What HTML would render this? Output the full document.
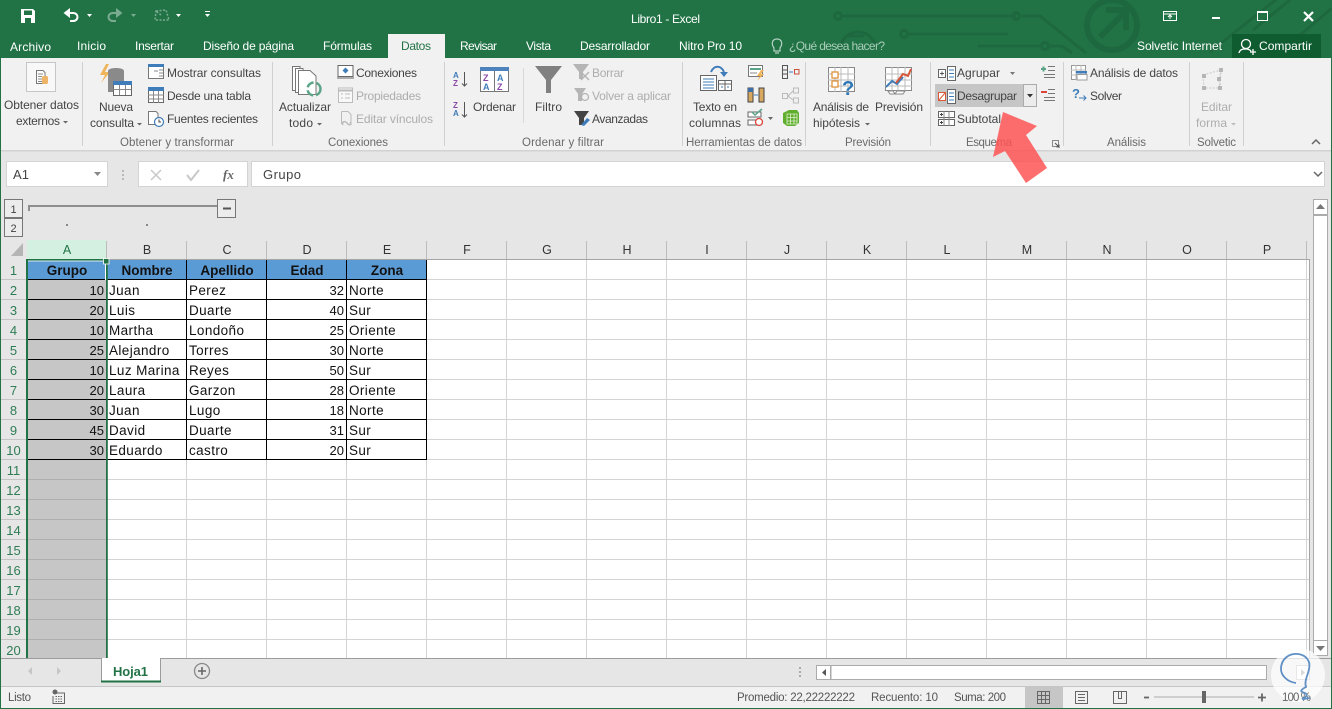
<!DOCTYPE html>
<html><head><meta charset="utf-8"><title>Libro1 - Excel</title>
<style>
html,body{margin:0;padding:0;background:#e6e6e6;overflow:hidden}
svg{display:block;font-family:"Liberation Sans",sans-serif}
.r{font-size:12px;fill:#444}
.g{font-size:12px;fill:#adadad}
.l{font-size:11.5px;fill:#6a6a6a}
.t{font-size:12px;fill:#fff}
.s{font-size:11.5px;fill:#555}
.c{font-size:13.5px;fill:#111;letter-spacing:.4px}
.n{font-size:13px;fill:#111;text-anchor:end}
.h{font-size:13.5px;font-weight:bold;fill:#111;text-anchor:middle}
.ch{font-size:12.5px;fill:#333;text-anchor:middle}
.rn{font-size:13px;fill:#2f7d55;text-anchor:middle}
</style></head><body>
<svg width="1332" height="709" viewBox="0 0 1332 709" xmlns="http://www.w3.org/2000/svg">
<defs>
<pattern id="grid" patternUnits="userSpaceOnUse" x="27" y="260" width="80" height="20"><rect width="80" height="20" fill="#fff"/><path d="M79.5 0V20M0 19.5H80" stroke="#d4d4d4" fill="none"/></pattern>
<pattern id="gsel" patternUnits="userSpaceOnUse" x="27" y="260" width="80" height="20"><rect width="80" height="20" fill="#c6c6c6"/><path d="M0 19.5H80" stroke="#aeaeae" fill="none"/></pattern>
</defs>
<!-- window -->
<rect width="1332" height="709" fill="#217346"/>
<!-- circuit decoration -->
<g fill="none" stroke="#1e6840" stroke-width="3">
<path d="M843 16H1016"/><path d="M1022 16H1040L1086 53"/><circle cx="838" cy="16" r="3.5"/><circle cx="1016" cy="16" r="3.5"/>
<path d="M909 34H1008"/><circle cx="904" cy="34" r="3.5"/><path d="M978 46H1040"/><circle cx="1045" cy="46" r="3.5"/><path d="M1050 46H1062L1072 53"/>
<path d="M840 50A18 18 0 0 1 876 50"/><path d="M848 36H864"/>
<circle cx="1112" cy="25" r="25" stroke-width="6"/><path d="M1100 37L1124 13M1106 10H1126V30" stroke-width="6"/>
<path d="M1210 52L1288 -10M1280 52L1332 8M1253 30L1290 0" />
</g>
<!-- QAT -->
<g fill="#fff"><path d="M21 9H33L35 11V23H21ZM24 10.5V15H32V10.5ZM25 18V23H31V18Z" fill-rule="evenodd"/></g>
<g fill="none" stroke="#fff" stroke-width="2"><path d="M66 13H73C79 13 79 21 73 21H70"/></g><path d="M70 8V18L63.500 13Z" fill="#fff"/>
<path d="M87 14H92L89.500 17ZM205 14H210L207.500 17ZM176 14H181L178.500 17Z" fill="#fff"/><path d="M205 11.500H210" stroke="#fff"/>
<g opacity=".4"><g fill="none" stroke="#fff" stroke-width="2"><path d="M120 13H113C107 13 107 21 113 21H116"/></g><path d="M116 8V18L122.500 13Z" fill="#fff"/><path d="M131 14H136L133.500 17Z" fill="#fff"/>
<path d="M156 11L166 10L169 20H155ZM161 15L156 11" fill="none" stroke="#fff" stroke-dasharray="2 1.500" stroke-width="1.500"/></g>
<text x="631" y="23" class="t" textLength="69">Libro1 - Excel</text>
<!-- window controls -->
<g fill="none" stroke="#fff"><path d="M1163.500 11.500H1176.500V20.500H1163.500ZM1163.500 14H1176.500"/><path d="M1170 19V15.500M1168 17L1170 15L1172 17"/>
<path d="M1212 18H1220" stroke-width="2"/><path d="M1257.500 12.500H1267.500V20.500H1257.500Z"/><path d="M1257 12H1268" stroke-width="2"/><path d="M1304 12L1313 21M1313 12L1304 21" stroke-width="2.200"/></g>
<!-- tabs -->
<rect x="1" y="58" width="1330" height="92" fill="#f1f1f1"/>
<rect x="388" y="34" width="57" height="24" fill="#f1f1f1"/>
<text x="10" y="51" class="t" textLength="41">Archivo</text>
<text x="77" y="50" class="t" textLength="29">Inicio</text>
<text x="135" y="50" class="t" textLength="39">Insertar</text>
<text x="203" y="50" class="t" textLength="91">Diseño de página</text>
<text x="323" y="50" class="t" textLength="49">Fórmulas</text>
<text x="401" y="50" class="t" style="fill:#217346" textLength="30">Datos</text>
<text x="460" y="50" class="t" textLength="37">Revisar</text>
<text x="526" y="50" class="t" textLength="25">Vista</text>
<text x="580" y="50" class="t" textLength="70">Desarrollador</text>
<text x="679" y="50" class="t" textLength="63">Nitro Pro 10</text>
<g fill="none" stroke="#b5d2c2" stroke-width="1.200"><path d="M774 48C771 44 772 39 777 39C782 39 783 44 780 48V51H774ZM775 53H779"/></g>
<text x="789" y="50" class="t" style="fill:#a9cdb8" textLength="96">¿Qué desea hacer?</text>
<text x="1137" y="50" class="t" textLength="85">Solvetic Internet</text>
<rect x="1232" y="34" width="89" height="24" fill="#0f5c31"/>
<g fill="none" stroke="#fff" stroke-width="1.300"><circle cx="1246" cy="44" r="4.500"/><path d="M1239 53C1240 49 1243 49 1246 49C1249 49 1250 50 1251 51M1250 52H1256M1253 49V55"/></g>
<text x="1259" y="50" class="t" textLength="53">Compartir</text>
<!-- ribbon line & lower -->
<rect x="1" y="150" width="1330" height="90" fill="#e6e6e6"/>
<rect x="1" y="150" width="1330" height="1.500" fill="#d2d2d2"/>
<!-- group seps -->
<path d="M82.500 62V146M272.500 62V146M444.500 62V146M682.500 62V146M805.500 62V146M930.500 62V146M1063.500 62V146M1189.500 62V146M1243.500 62V146" stroke="#d0d0d0"/>
<path d="M523.500 68V123" stroke="#d8d8d8"/>
<!-- Obtener datos -->
<rect x="26.500" y="62.500" width="29" height="29" fill="#f8f8f8" stroke="#c6c6c6"/>
<path d="M36.500 70.500H43L45 72.500V83.500H36.500Z" fill="#fff" stroke="#777"/><path d="M38 74H43M38 76.500H42M38 79H42M38 81.500H42" stroke="#888"/><rect x="42" y="76" width="6" height="8" rx="1.500" fill="#eeb566"/>
<text x="4" y="109" class="r" textLength="75">Obtener datos</text><text x="16" y="125" class="r" textLength="44">externos</text><path d="M63 121H68L65.500 123.500Z" fill="#666"/>
<!-- Nueva consulta -->
<path d="M106 64L100 75H105L101 83L110 72H105L109 64Z" fill="#f0b45a"/>
<path d="M108 71C108 67 124 67 124 71V92H108Z" fill="#8a8a8a"/>
<rect x="113.500" y="81.500" width="18" height="14" fill="#fff" stroke="#666"/><rect x="113" y="81" width="19" height="4" fill="#3f7cba"/><path d="M113 89.500H131M119.500 85V95M125.500 85V95" stroke="#888"/>
<text x="99" y="111" class="r" textLength="34">Nueva</text><text x="90" y="127" class="r" textLength="44">consulta</text><path d="M137 123H142L139.500 125.500Z" fill="#666"/>
<rect x="148.500" y="64.500" width="15" height="14" fill="#fff" stroke="#777"/><rect x="148" y="64" width="16" height="3" fill="#3f7cba"/><path d="M159 70H163M159 73H163M159 76H163M154 71H158" stroke="#888"/>
<text x="167" y="77" class="r" textLength="94">Mostrar consultas</text>
<rect x="148.500" y="87.500" width="15" height="15" fill="#fff" stroke="#666"/><rect x="148" y="87" width="16" height="4" fill="#3f7cba"/><path d="M148 95H164M148 99H164M153.500 91V103M158.500 91V103" stroke="#888"/>
<text x="167" y="100" class="r" textLength="84">Desde una tabla</text>
<path d="M148.500 111.500H156L158 113.500V124.500H148.500Z" fill="#fff" stroke="#777"/><circle cx="159" cy="122" r="4.500" fill="#fff" stroke="#3f7cba" stroke-width="1.200"/><path d="M159 119.500V122H161" stroke="#444" fill="none"/>
<text x="167" y="123" class="r" textLength="91">Fuentes recientes</text>
<text x="120" y="146" class="l" textLength="114">Obtener y transformar</text>
<!-- Actualizar -->
<g fill="#fff" stroke="#777"><path d="M292.500 66.500H300V90.500H292.500Z"/><path d="M295.500 68.500H303V92.500H295.500Z"/><path d="M298.500 70.500H310L316 76V94.500H298.500Z"/></g>
<circle cx="314" cy="89" r="6.500" fill="none" stroke="#5aa587" stroke-width="2.500" stroke-dasharray="8 3"/>
<text x="279" y="111" class="r" textLength="52">Actualizar</text><text x="289" y="127" class="r" textLength="24">todo</text><path d="M317 123H322L319.500 125.500Z" fill="#666"/>
<rect x="338" y="65.500" width="15" height="11" fill="#fff" stroke="#666"/><path d="M345.500 67.500L348.500 70.500L345.500 73.500L342.500 70.500Z" fill="#3f7cba"/><path d="M337 78H354" stroke="#666"/>
<text x="356" y="77" class="r" textLength="61">Conexiones</text>
<rect x="338.500" y="88" width="14" height="14.500" fill="#f8f8f8" stroke="#bbb"/><path d="M338 90.500H353" stroke="#bbb" stroke-width="2"/><path d="M341 94H343M345 94H350M341 98H343M345 98H350" stroke="#bbb"/>
<text x="356" y="100" class="g" textLength="65">Propiedades</text>
<path d="M341.500 111.500H348L351 114.500V125" fill="none" stroke="#bbb"/><path d="M341.500 111.500V124" stroke="#bbb"/><path d="M343 125C341 121 346 121 347 123M347 123C349 126 352 125 350 122" fill="none" stroke="#bbb" stroke-width="1.500"/>
<text x="356" y="123" class="g" textLength="77">Editar vínculos</text>
<text x="328" y="146" class="l" textLength="60">Conexiones</text>
<!-- Sort -->
<text x="453" y="78" style="font-size:8px;font-weight:bold;fill:#3f7cba">A</text><text x="453" y="86" style="font-size:8px;font-weight:bold;fill:#8a48a8">Z</text><path d="M464.500 72V86M462 83.500L464.500 86L467 83.500" fill="none" stroke="#555"/>
<text x="453" y="108" style="font-size:8px;font-weight:bold;fill:#8a48a8">Z</text><text x="453" y="116" style="font-size:8px;font-weight:bold;fill:#3f7cba">A</text><path d="M464.500 102V117M462 114.500L464.500 117L467 114.500" fill="none" stroke="#555"/>
<rect x="480.500" y="67.500" width="28" height="24" fill="#fff" stroke="#777"/><rect x="480" y="67" width="29" height="4" fill="#4d82bd"/><path d="M494.500 71V91" stroke="#777"/>
<text x="483" y="81" style="font-size:9px;font-weight:bold;fill:#8a48a8">Z</text><text x="483" y="90" style="font-size:9px;font-weight:bold;fill:#3f7cba">A</text><text x="497" y="81" style="font-size:9px;font-weight:bold;fill:#3f7cba">A</text><text x="497" y="90" style="font-size:9px;font-weight:bold;fill:#8a48a8">Z</text>
<text x="473" y="111" class="r" textLength="43">Ordenar</text>
<path d="M535 66H562L551 80V93H546V80Z" fill="#808080"/>
<text x="535" y="111" class="r" textLength="27">Filtro</text>
<path d="M573 64H589L583 72V79H579V72Z" fill="#b5b5b5"/><path d="M581 72L589 80M589 72L581 80" stroke="#b5b5b5" stroke-width="1.500"/>
<text x="592" y="77" class="g" textLength="32">Borrar</text>
<path d="M574 88H586L582 94V101H578V94Z" fill="#b5b5b5"/><circle cx="585" cy="97" r="3.500" fill="none" stroke="#b5b5b5" stroke-width="1.300"/>
<text x="592" y="100" class="g" textLength="79">Volver a aplicar</text>
<path d="M574 111H589L584 118V125H579V118Z" fill="#444"/><path d="M581 125L587 118L590 120L584 126Z" fill="#3f7cba"/>
<text x="592" y="123" class="r" textLength="56">Avanzadas</text>
<text x="522" y="146" class="l" textLength="82">Ordenar y filtrar</text>
<!-- Datos tools -->
<path d="M711 72C714 65 721 65 724 72" fill="none" stroke="#3f7cba" stroke-width="2"/><path d="M720 72H728L724 77Z" fill="#3f7cba"/>
<rect x="700.500" y="75.500" width="16" height="15" fill="#fff" stroke="#666"/><path d="M703 79H714M703 82H714M703 85H714M703 88H714" stroke="#3f7cba"/>
<rect x="718.500" y="80.500" width="13" height="10" fill="#fff" stroke="#666"/><path d="M718 84H731M725 80V90" stroke="#666"/><path d="M721 87H723M727 87H729" stroke="#3f7cba"/>
<text x="693" y="111" class="r" textLength="44">Texto en</text><text x="689" y="127" class="r" textLength="52">columnas</text>
<rect x="748.500" y="65.500" width="14" height="11" fill="#fff" stroke="#777"/><path d="M750 69H761" stroke="#5aa587" stroke-width="2"/><path d="M750 73H757" stroke="#888"/><path d="M761 70L757 76H760L757 81L764 74H761L764 70Z" fill="#f0b45a"/>
<rect x="748" y="88" width="5" height="14" fill="#d9a860" stroke="#444"/><rect x="759" y="88" width="5" height="14" fill="#d9a860" stroke="#444"/><rect x="748" y="88" width="5" height="4" fill="#3f6fa8"/><path d="M754 95H758" stroke="#3f7cba"/>
<path d="M748 112H761V117H748ZM748 120H761V125H748Z" fill="#fff" stroke="#666"/><path d="M752 112L755 115L762 109" fill="none" stroke="#5aa587" stroke-width="1.500"/><circle cx="759" cy="122" r="3.500" fill="#fff" stroke="#d9453a" stroke-width="1.300"/>
<path d="M768 117H773L770.500 120Z" fill="#666"/>
<path d="M782.500 65.500H787.500V78.500H782.500ZM782.500 70H787.500M782.500 74H787.500" fill="none" stroke="#555"/><rect x="794.500" y="69.500" width="4.500" height="4.500" fill="none" stroke="#c8503a"/><path d="M789 72H793" stroke="#3f7cba"/>
<g fill="none" stroke="#bbb"><rect x="782.500" y="93.500" width="5" height="5"/><rect x="793.500" y="88" width="5" height="5"/><rect x="793.500" y="98" width="5" height="5"/><path d="M788 96L793 91M788 96L793 100"/></g>
<path d="M783 113L789 110H797L799 113V123L795 126H787L783 123Z" fill="#5fae2e"/><path d="M787 114H797V124H787ZM790.500 114V124M794 114V124M787 117.500H797M787 121H797" fill="none" stroke="#dff0cf" stroke-width=".8"/>
<text x="686" y="146" class="l" textLength="116">Herramientas de datos</text>
<!-- Previsión -->
<rect x="828.500" y="67.500" width="26" height="24" fill="#fff" stroke="#888"/><path d="M828 74H855M828 80H855M828 86H855M835 67V92M841 67V92M848 67V92" stroke="#bbb"/><rect x="832" y="72" width="6" height="6" fill="#fff" stroke="#e0913a" stroke-width="1.300"/><rect x="832" y="81" width="6" height="6" fill="#fff" stroke="#e0913a" stroke-width="1.300"/>
<text x="842" y="95" style="font-size:20px;font-weight:bold;fill:#2f78b8">?</text>
<text x="813" y="111" class="r" textLength="56">Análisis de</text><text x="813" y="127" class="r" textLength="47">hipótesis</text><path d="M865 123H870L867.500 125.500Z" fill="#666"/>
<rect x="885.500" y="67.500" width="26" height="23" fill="#fff" stroke="#888"/><path d="M885 74H912M885 80H912M885 86H912M892 67V91M898 67V91M905 67V91" stroke="#bbb"/>
<path d="M886 87L892 81L897 84L903 77" fill="none" stroke="#3f7cba" stroke-width="2"/><path d="M896 83L903 74L908 76L911 69" fill="none" stroke="#d9583a" stroke-width="2"/>
<path d="M888 91H893L895 94H890ZM897 91H905L903 94H895Z" fill="#fff" stroke="#888"/>
<text x="875" y="111" class="r" textLength="48">Previsión</text>
<text x="845" y="146" class="l" textLength="46">Previsión</text>
<!-- Esquema -->
<rect x="935" y="84" width="102" height="23" fill="#c6c6c6"/><rect x="1023.500" y="84.500" width="13" height="22" fill="#ececec" stroke="#ababab"/><path d="M1027 94H1033L1030 97.500Z" fill="#333"/>
<g fill="#fff" stroke="#666"><rect x="938.500" y="69.500" width="7" height="8"/><rect x="947.500" y="66.500" width="8" height="14"/></g><path d="M940 73.500H944M942 71.500V75.500" stroke="#555"/><path d="M949 70H954M949 73.500H954M949 77H954" stroke="#3f7cba"/>
<text x="957" y="77" class="r" textLength="43">Agrupar</text><path d="M1010 72H1015L1012.500 75Z" fill="#777"/>
<g stroke="#d9583a" fill="#fff"><rect x="938.500" y="92.500" width="7" height="8"/></g><path d="M939 100L945 93" stroke="#d9583a"/><rect x="947.500" y="89.500" width="8" height="14" fill="#fff" stroke="#666"/><path d="M949 93H954M949 96.500H954M949 100H954" stroke="#3f7cba"/>
<text x="957" y="100" class="r" textLength="60">Desagrupar</text>
<g fill="#fff" stroke="#666"><path d="M938.500 111.500H954.500V117.500H938.500ZM938.500 119.500H954.500V125.500H938.500Z"/></g><path d="M944 111V126M949 111V126" stroke="#888"/><path d="M940 114.500H943M940 122.500H943M941.500 113V116M941.500 121V124" stroke="#444"/>
<text x="957" y="123" class="r" textLength="44">Subtotal</text>
<path d="M1041 69H1046M1043.500 66.500V71.500" stroke="#5aa587" stroke-width="2"/><path d="M1048 66.500H1055M1048 70.500H1055M1044 74.500H1055M1044 77.500H1055" stroke="#777"/>
<path d="M1041 92H1047" stroke="#d9453a" stroke-width="2"/><path d="M1048 89.500H1055M1048 93.500H1055M1044 97.500H1055M1044 100.500H1055" stroke="#777"/>
<text x="966" y="146" class="l" textLength="46">Esquema</text>
<path d="M1052.500 140.500H1058.500V146.500H1052.500Z" fill="none" stroke="#888"/><path d="M1055 143L1059 147V144.500M1059 147H1056.500" fill="none" stroke="#555"/>
<!-- Análisis -->
<rect x="1071.500" y="65.500" width="14" height="14" fill="#fff" stroke="#999"/><path d="M1071 70H1086M1071 75H1086M1076 65V80M1081 65V80" stroke="#bbb"/><rect x="1076" y="71" width="11" height="2.500" fill="#3f7cba"/><path d="M1077 74.500H1087V80H1077Z" fill="#fff" stroke="#999"/>
<text x="1090" y="77" class="r" textLength="88">Análisis de datos</text>
<text x="1072" y="98" style="font-size:13px;font-weight:bold;fill:#3f7cba">?</text><path d="M1079 98H1086M1083.500 95.500L1086 98L1083.500 100.500" fill="none" stroke="#3f7cba"/>
<text x="1090" y="100" class="r" textLength="32">Solver</text>
<text x="1107" y="146" class="l" textLength="39">Análisis</text>
<!-- Solvetic -->
<path d="M1203 75L1221 70L1220 88H1204ZM1221 70L1219 80L1220 88" fill="none" stroke="#c8c8c8" stroke-dasharray="2 1.500"/><path d="M1202 74h4v4h-4ZM1219 68h4v4h-4ZM1218 86h4v4h-4ZM1202 86h4v4h-4ZM1217 77h4v4h-4Z" fill="#b5b5b5"/>
<text x="1201" y="111" class="g" textLength="31">Editar</text><text x="1196" y="127" class="g" textLength="31">forma</text><path d="M1231 123H1236L1233.500 125.500Z" fill="#bbb"/>
<text x="1197" y="146" class="l" textLength="39">Solvetic</text>
<path d="M1312 144L1316 140L1320 144" fill="none" stroke="#666" stroke-width="1.500"/>
<!-- Formula bar -->
<rect x="6.500" y="161.500" width="101" height="25" fill="#fff" stroke="#d4d4d4"/>
<text x="13" y="179" style="font-size:13px;fill:#444" textLength="16">A1</text><path d="M94 172H101L97.500 176Z" fill="#888"/>
<path d="M123 170V172M123 174V176M123 178V180" stroke="#aaa" stroke-width="1.500"/>
<rect x="138.500" y="161.500" width="109" height="25" fill="#fff" stroke="#d4d4d4"/>
<path d="M151 170L161 180M161 170L151 180" stroke="#c8c8c8" stroke-width="1.500"/><path d="M187 175L191 180L199 170" fill="none" stroke="#c8c8c8" stroke-width="2"/>
<text x="223" y="179" style="font-family:'Liberation Serif',serif;font-style:italic;font-weight:bold;font-size:13px;fill:#666">fx</text>
<rect x="251.500" y="161.500" width="1073" height="25" fill="#fff" stroke="#d4d4d4"/>
<text x="263" y="179" style="font-size:13px;fill:#444" textLength="38">Grupo</text>
<path d="M1314 172L1318 176L1322 172" fill="none" stroke="#666" stroke-width="1.500"/>
<!-- outline -->
<rect x="4.500" y="199.500" width="18" height="18" fill="#ececec" stroke="#777"/><rect x="4.500" y="218.500" width="18" height="18" fill="#ececec" stroke="#777"/>
<text x="13.500" y="213" style="font-size:11px;fill:#444;text-anchor:middle">1</text><text x="13.500" y="232" style="font-size:11px;fill:#444;text-anchor:middle">2</text>
<path d="M29 206H217" stroke="#8e8e8e" stroke-width="2"/><rect x="28" y="205" width="2" height="6" fill="#8e8e8e"/>
<rect x="217.500" y="199.500" width="18" height="18" fill="#ececec" stroke="#777"/><path d="M223 208.500H231" stroke="#555" stroke-width="2"/>
<rect x="66" y="224" width="2" height="2" fill="#888"/><rect x="146" y="224" width="2" height="2" fill="#888"/>
<!-- headers -->
<rect x="1" y="240" width="1330" height="420" fill="#e6e6e6"/>
<rect x="27" y="240" width="80" height="19" fill="#d3f0e0"/>
<path d="M23 243V256H11Z" fill="#b5b5b5"/>
<path d="M106.500 241V259M186.500 241V259M266.500 241V259M346.500 241V259M426.500 241V259M506.500 241V259M586.500 241V259M666.500 241V259M746.500 241V259M826.500 241V259M906.500 241V259M986.500 241V259M1066.500 241V259M1146.500 241V259M1226.500 241V259M1306.500 241V259" stroke="#bcbcbc"/>
<text x="67" y="254" class="ch" style="fill:#217346">A</text><text x="147" y="254" class="ch">B</text><text x="227" y="254" class="ch">C</text><text x="307" y="254" class="ch">D</text><text x="387" y="254" class="ch">E</text><text x="467" y="254" class="ch">F</text><text x="547" y="254" class="ch">G</text><text x="627" y="254" class="ch">H</text><text x="707" y="254" class="ch">I</text><text x="787" y="254" class="ch">J</text><text x="867" y="254" class="ch">K</text><text x="947" y="254" class="ch">L</text><text x="1027" y="254" class="ch">M</text><text x="1107" y="254" class="ch">N</text><text x="1187" y="254" class="ch">O</text><text x="1267" y="254" class="ch">P</text>
<!-- cells -->
<rect x="27" y="260" width="1282" height="398" fill="url(#grid)"/>
<rect x="27" y="260" width="80" height="398" fill="url(#gsel)"/>
<path d="M1309.500 259V658M26 259.500H1309.500" stroke="#a5a5a5" fill="none"/>
<rect x="27" y="260" width="400" height="20" fill="#5b9bd5"/>
<path d="M27 279.500H427M27 299.500H427M27 319.500H427M27 339.500H427M27 359.500H427M27 379.500H427M27 399.500H427M27 419.500H427M27 439.500H427M27 459.500H427M186.500 260V460M266.500 260V460M346.500 260V460M426.500 260V460" stroke="#000"/>
<!-- row headers -->
<g stroke="#c4c4c4"><path d="M1 279.500H26M1 299.500H26M1 319.500H26M1 339.500H26M1 359.500H26M1 379.500H26M1 399.500H26M1 419.500H26M1 439.500H26M1 459.500H26M1 479.500H26M1 499.500H26M1 519.500H26M1 539.500H26M1 559.500H26M1 579.500H26M1 599.500H26M1 619.500H26M1 639.500H26"/></g>
<text x="13.500" y="275" class="rn">1</text><text x="13.500" y="295" class="rn">2</text><text x="13.500" y="315" class="rn">3</text><text x="13.500" y="335" class="rn">4</text><text x="13.500" y="355" class="rn">5</text><text x="13.500" y="375" class="rn">6</text><text x="13.500" y="395" class="rn">7</text><text x="13.500" y="415" class="rn">8</text><text x="13.500" y="435" class="rn">9</text><text x="13.500" y="455" class="rn">10</text><text x="13.500" y="475" class="rn">11</text><text x="13.500" y="495" class="rn">12</text><text x="13.500" y="515" class="rn">13</text><text x="13.500" y="535" class="rn">14</text><text x="13.500" y="555" class="rn">15</text><text x="13.500" y="575" class="rn">16</text><text x="13.500" y="595" class="rn">17</text><text x="13.500" y="615" class="rn">18</text><text x="13.500" y="635" class="rn">19</text><text x="13.500" y="655" class="rn">20</text>
<!-- data -->
<text x="67" y="275" class="h">Grupo</text><text x="147" y="275" class="h">Nombre</text><text x="227" y="275" class="h">Apellido</text><text x="307" y="275" class="h">Edad</text><text x="387" y="275" class="h">Zona</text>
<text x="104" y="295" class="n">10</text><text x="109" y="295" class="c">Juan</text><text x="189" y="295" class="c">Perez</text><text x="344" y="295" class="n">32</text><text x="349" y="295" class="c">Norte</text>
<text x="104" y="315" class="n">20</text><text x="109" y="315" class="c">Luis</text><text x="189" y="315" class="c">Duarte</text><text x="344" y="315" class="n">40</text><text x="349" y="315" class="c">Sur</text>
<text x="104" y="335" class="n">10</text><text x="109" y="335" class="c">Martha</text><text x="189" y="335" class="c">Londoño</text><text x="344" y="335" class="n">25</text><text x="349" y="335" class="c">Oriente</text>
<text x="104" y="355" class="n">25</text><text x="109" y="355" class="c">Alejandro</text><text x="189" y="355" class="c">Torres</text><text x="344" y="355" class="n">30</text><text x="349" y="355" class="c">Norte</text>
<text x="104" y="375" class="n">10</text><text x="109" y="375" class="c">Luz Marina</text><text x="189" y="375" class="c">Reyes</text><text x="344" y="375" class="n">50</text><text x="349" y="375" class="c">Sur</text>
<text x="104" y="395" class="n">20</text><text x="109" y="395" class="c">Laura</text><text x="189" y="395" class="c">Garzon</text><text x="344" y="395" class="n">28</text><text x="349" y="395" class="c">Oriente</text>
<text x="104" y="415" class="n">30</text><text x="109" y="415" class="c">Juan</text><text x="189" y="415" class="c">Lugo</text><text x="344" y="415" class="n">18</text><text x="349" y="415" class="c">Norte</text>
<text x="104" y="435" class="n">45</text><text x="109" y="435" class="c">David</text><text x="189" y="435" class="c">Duarte</text><text x="344" y="435" class="n">31</text><text x="349" y="435" class="c">Sur</text>
<text x="104" y="455" class="n">30</text><text x="109" y="455" class="c">Eduardo</text><text x="189" y="455" class="c">castro</text><text x="344" y="455" class="n">20</text><text x="349" y="455" class="c">Sur</text>
<!-- selection -->
<rect x="26" y="259" width="2" height="399" fill="#217346"/><rect x="106" y="259" width="1.800" height="399" fill="#217346"/><rect x="26" y="259" width="81" height="1.500" fill="#217346"/>
<rect x="28" y="260.500" width="77" height="1" fill="#fff" opacity=".8"/><rect x="105" y="261" width="1" height="19" fill="#fff"/>
<rect x="103.500" y="258.500" width="5.500" height="5.500" fill="#217346" stroke="#fff" stroke-width=".8"/>
<!-- vertical scrollbar -->
<rect x="1313.500" y="199.500" width="14" height="456" fill="#fff" stroke="#ababab"/>
<rect x="1314" y="214" width="13" height="2" fill="#ababab"/>
<path d="M1316 209L1320.500 204L1325 209Z" fill="#777"/>
<rect x="1313.500" y="640.500" width="14" height="15" fill="#fff" stroke="#ababab"/><path d="M1316 646L1320.500 651L1325 646Z" fill="#777"/>
<!-- sheet tabs -->
<rect x="1" y="658" width="1330" height="29" fill="#e6e6e6"/>
<path d="M1 658.500H1331" stroke="#9c9c9c"/>
<path d="M1 686.500H1331" stroke="#c6c6c6"/>
<rect x="101.500" y="658" width="59" height="24" fill="#fff"/><path d="M101.500 658V682M160.500 658V682" stroke="#9c9c9c"/><rect x="101" y="680.500" width="60" height="2" fill="#217346"/>
<text x="113" y="676" style="font-size:13px;font-weight:bold;fill:#217346" textLength="35">Hoja1</text>
<path d="M32 667V675L28 671ZM57 667V675L61 671Z" fill="#c6c6c6"/>
<circle cx="202" cy="671" r="7.500" fill="none" stroke="#888" stroke-width="1.300"/><path d="M198 671H206M202 667V675" stroke="#666" stroke-width="1.600"/>
<path d="M800 667V669M800 671V673M800 675V677" stroke="#aaa" stroke-width="2"/>
<rect x="816.500" y="665.500" width="450" height="14" fill="#fff" stroke="#ababab"/><rect x="830" y="666" width="1.500" height="13" fill="#ababab"/><path d="M826 669V676L822 672.500Z" fill="#555"/>
<rect x="1296.500" y="665.500" width="13" height="14" fill="#fff" stroke="#ababab"/><path d="M1301 669V676L1305 672.500Z" fill="#777"/>
<!-- status -->
<rect x="1" y="687" width="1330" height="21" fill="#f1f1f1"/>
<text x="8" y="701" class="s" textLength="23">Listo</text>
<g fill="none" stroke="#666"><path d="M55 693H64.500V703.500H53V696"/><path d="M55.500 696.500H63M55.500 699H63M55.500 701.500H63" stroke-dasharray="1.500 1"/></g><circle cx="55" cy="692" r="2.500" fill="#666"/>
<text x="737" y="701" class="s" textLength="118">Promedio: 22,22222222</text>
<text x="871" y="701" class="s" textLength="67">Recuento: 10</text>
<text x="954" y="701" class="s" textLength="52">Suma: 200</text>
<rect x="1025" y="687" width="38" height="21" fill="#c6c6c6"/>
<path d="M1037.500 691.500H1049.500V703.500H1037.500ZM1041.500 691.500V703.500M1045.500 691.500V703.500M1037.500 695.500H1049.500M1037.500 699.500H1049.500" fill="none" stroke="#666"/>
<path d="M1075.500 691.500H1087.500V703.500H1075.500Z" fill="none" stroke="#666"/><path d="M1078 694.500H1085M1078 697.500H1085M1078 700.500H1085" stroke="#666"/>
<path d="M1113.500 691.500H1126.500V703.500H1113.500ZM1118.500 691.500V698.500H1121.500V691.500" fill="none" stroke="#666"/>
<path d="M1144 697.500H1149" stroke="#666" stroke-width="1.800"/><path d="M1154 697H1254" stroke="#aaa"/><rect x="1202" y="691" width="4" height="12" fill="#666"/>
<path d="M1258 697.500H1266M1262 693.500V701.500" stroke="#666" stroke-width="1.800"/>
<!-- window border -->
<rect x="0" y="58" width="1" height="651" fill="#217346"/><rect x="1331" y="58" width="1" height="651" fill="#217346"/><rect x="0" y="708" width="1332" height="1" fill="#217346"/>
<!-- arrow -->
<path d="M1003 112L1037 126L1026 135L1047 168L1026 183L1005 151L993 157Z" fill="#ff5252" fill-opacity=".84"/>
<!-- watermark -->
<circle cx="1298" cy="675" r="27" fill="#fff" fill-opacity=".72"/>
<text x="1282" y="701" style="font-size:11.500px;fill:#666" textLength="29">100 %</text>
<path d="M1296 683C1288 682 1281 676 1281 669C1281 659 1289 653 1298 654C1306 655 1311 661 1309 669C1308 675 1304 681 1306 687C1302 689 1300 691 1302 692C1306 693 1310 695 1302 699C1306 699 1308 698 1310 698" fill="none" stroke="#5f8fc4" stroke-width="1.800"/>
</svg>
</body></html>
